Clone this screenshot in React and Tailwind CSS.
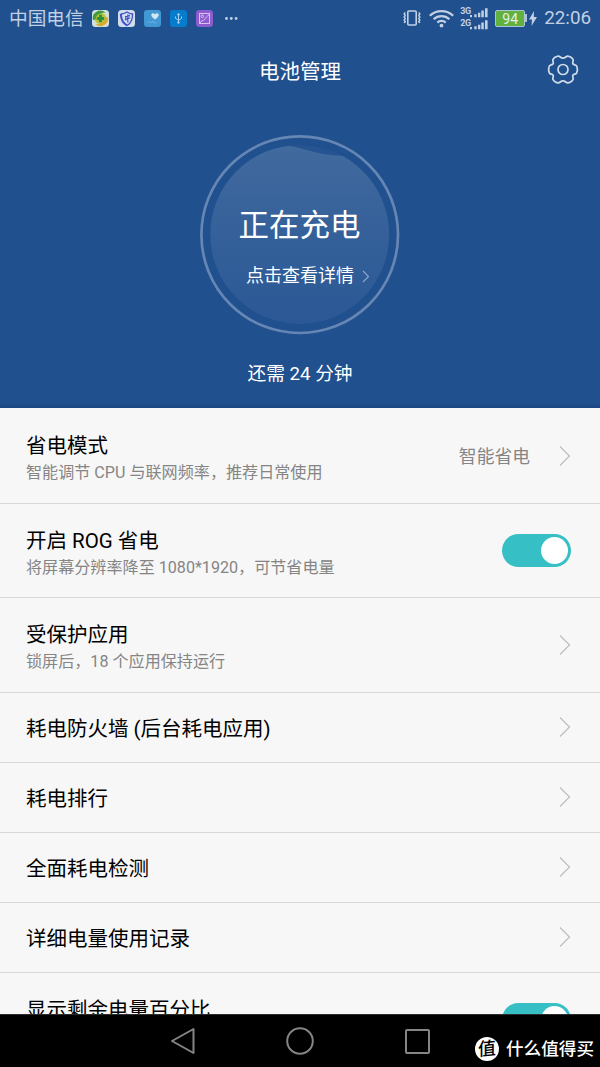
import React from "react";

const settings = [
  {
    title: "省电模式",
    note: "智能调节 CPU 与联网频率，推荐日常使用",
    value: "智能省电",
    tall: true,
  },
  {
    title: "开启 ROG 省电",
    note: "将屏幕分辨率降至 1080*1920，可节省电量",
    toggle: true,
    tall: true,
  },
  { title: "受保护应用", note: "锁屏后，18 个应用保持运行", tall: true },
  { title: "耗电防火墙 (后台耗电应用)" },
  { title: "耗电排行" },
  { title: "全面耗电检测" },
  { title: "详细电量使用记录" },
  { title: "显示剩余电量百分比", toggle: true, tall: true },
];

const Chevron = () => (
  <svg width="12" height="22" viewBox="0 0 12 22" fill="none" stroke="#bdbdbd" strokeWidth="1.2">
    <path d="M1 1.5 10.5 11 1 20.5" />
  </svg>
);

const Toggle = () => (
  <div className="flex h-[33px] w-[69px] items-center justify-end rounded-full bg-[#36c0c6] pr-[3px]">
    <div className="size-[27px] rounded-full bg-white" />
  </div>
);

const AppIcons = () => (
  <div className="flex items-center gap-[9px]">
    <svg width="17" height="17" viewBox="0 0 17 17">
      <rect width="17" height="17" rx="3.5" fill="#d3dfdc" />
      <circle cx="8.5" cy="8.5" r="5.8" fill="#b9c63c" />
      <path d="M1 10A7.5 7.5 0 0 1 13.5 2.8C8.5 2.5 4 4.5 3.5 9.5Z" fill="#3f9a40" />
      <path d="M15.8 7A7.5 7.5 0 0 1 3.5 14.2C9 14.5 13.5 12 13.3 7.5Z" fill="#d8a92e" />
      <path d="M8.5 4.8v7.4M4.8 8.5h7.4" stroke="#2f8f3a" strokeWidth="3" />
    </svg>
    <svg width="17" height="17" viewBox="0 0 17 17" fill="none">
      <rect width="17" height="17" rx="3.5" fill="#d2dcec" />
      <path d="M2.8 4C5 4 7 3.3 9 2c2 1.4 3.6 2 5.6 2 0 5-1.2 9-5.4 11.5" stroke="#3a4fcb" strokeWidth="1.3" />
      <path d="M2.8 4c.2 5 1.7 9 6.4 11.5" stroke="#3a4fcb" strokeWidth="2" />
      <path d="M9.8 4.5v8M7 6.8l5-1.2M7 10l5-2.3M7.8 7.5v2.5" stroke="#3a4fcb" strokeWidth="1.2" />
    </svg>
    <svg width="17" height="17" viewBox="0 0 17 17" fill="none">
      <rect width="17" height="17" rx="3" fill="#4198d4" />
      <path d="M11 9.5C8.5 7.5 7.3 6.3 7.3 5 7.3 3 10 2.8 11 4.5c1-1.7 3.7-1.5 3.7.5 0 1.3-1.2 2.5-3.7 4.5Z" fill="#d5e5f1" />
      <path d="M3 12.5l2-1 2 1.5 2-2 1 2 2.5-.5" stroke="#70b4e0" strokeWidth=".8" />
    </svg>
    <svg width="17" height="17" viewBox="0 0 17 17" fill="none" stroke="#a9cdec">
      <rect width="17" height="17" rx="3" fill="#067ccd" stroke="none" />
      <path d="M8.5 4v8M5.5 6.5v1.8l3 2 3-1.8V6.5" strokeWidth="1" />
      <path d="M7 5l1.5-2L10 5Z" fill="#a9cdec" strokeWidth=".3" />
      <circle cx="8.5" cy="12.5" r="1" fill="#a9cdec" strokeWidth=".5" />
    </svg>
    <svg width="17" height="17" viewBox="0 0 17 17" fill="none" stroke="#d3c3ee" strokeWidth="1">
      <rect width="17" height="17" rx="3.5" fill="#8d5ccf" stroke="none" />
      <rect x="3.5" y="3.5" width="10" height="10" />
      <circle cx="6.3" cy="6.3" r="1.3" />
      <path d="M4 13c1-3 3-1.5 4.5-3.5S11 6 13 5" />
    </svg>
  </div>
);

const SignalRow = ({ label }) => (
  <div className="flex h-3 items-start">
    <span className="w-[10px] text-[9px] leading-[9px] font-bold tracking-[-0.5px]">{label}</span>
    <svg width="18" height="12" viewBox="0 0 18 12" fill="currentColor">
      <path d="M0 8h2v2.2H0zM4.3 7.2h2.3v3H4.3zM8 5.8h2.3v4.4H8zM11.3 3.5h2.5v6.7h-2.5zM15 1.2h2.6v9h-2.6z" />
    </svg>
  </div>
);

const StatusBar = () => (
  <div className="flex h-9 items-center justify-between px-[9px] text-[#c1d0e4]">
    <div className="flex items-center">
      <span className="mr-2 pt-[1px] text-[18.7px] leading-6">中国电信</span>
      <AppIcons />
      <svg className="ml-3" width="13" height="3" viewBox="0 0 13 3" fill="currentColor">
        <circle cx="1.5" cy="1.5" r="1.4" />
        <circle cx="6.3" cy="1.5" r="1.4" />
        <circle cx="11.1" cy="1.5" r="1.4" />
      </svg>
    </div>
    <div className="flex items-center">
      <svg width="18" height="16" viewBox="0 0 18 16" fill="none" stroke="currentColor">
        <rect x="4.8" y="1" width="8.4" height="14" rx="1" strokeWidth="1.6" />
        <path d="M2.2 2.5l-1 1.5 1 1.5-1 1.5 1 1.5-1 1.5 1 1.5-1 1.5M15.8 2.5l1 1.5-1 1.5 1 1.5-1 1.5 1 1.5-1 1.5 1 1.5" strokeWidth="1.5" />
      </svg>
      <svg className="ml-2" width="25" height="19" viewBox="0 0 25 19" fill="none" stroke="currentColor" strokeWidth="2.2">
        <path d="M.8 6.7a17 17 0 0 1 23.4 0M4.6 10.3a11.5 11.5 0 0 1 15.8 0M8.3 13.6a6 6 0 0 1 8.4 0" />
        <circle cx="12.5" cy="16.6" r="1.9" fill="currentColor" stroke="none" />
      </svg>
      <div className="mt-[1px] ml-[6px] flex flex-col">
        <SignalRow label="3G" />
        <SignalRow label="2G" />
      </div>
      <div className="ml-[7px] flex items-center">
        <div className="flex h-[17px] w-[30px] items-center justify-center rounded-[2px] border-[1.5px] border-[#a9c3dc] bg-[#62b13e] pt-[1px] text-[14px] leading-none text-[#e3efe2]">
          94
        </div>
        <div className="h-2 w-[2px] bg-[#a9c3dc]" />
      </div>
      <svg className="ml-[2px]" width="8" height="15" viewBox="0 0 8 15" fill="currentColor">
        <path d="M5 0 0 8.5h3L2.5 15 8 6H4.8z" />
      </svg>
      <span className="ml-[7px] text-[18.8px] leading-6">22:06</span>
    </div>
  </div>
);

const GearIcon = () => (
  <svg width="32" height="31" viewBox="0 0 32 31" fill="none" stroke="#d0dbea" strokeWidth="1.7" strokeLinejoin="round">
    <path d="M11.3 2.1C13 2 13.6 4.2 16 4.2S19 2 20.7 2.1C22.5 2.2 25.7 4 26.1 5.7C26.5 7.3 25 8.7 26 9.9S28.9 10.6 29.6 12C30.4 13.8 30.4 17.2 29.6 19C28.9 20.4 27 19.9 26 21.1S26.5 23.7 26.1 25.3C25.7 27 22.5 28.8 20.7 28.9C19 29 18.4 26.8 16 26.8S13 29 11.3 28.9C9.5 28.8 6.3 27 5.9 25.3C5.5 23.7 7 22.3 6 21.1S3.1 20.4 2.4 19C1.6 17.2 1.6 13.8 2.4 12C3.1 10.6 5 11.1 6 9.9S5.5 7.3 5.9 5.7C6.3 4 9.5 2.2 11.3 2.1Z" />
    <circle cx="16" cy="15.5" r="5" />
  </svg>
);

const ChargeDial = () => (
  <div className="relative mx-auto size-[200px]">
    <svg className="absolute inset-0" width="200" height="200" viewBox="0 0 200 200">
      <defs>
        <linearGradient id="fill" x1="0" y1="0" x2="0" y2="1">
          <stop offset="0" stopColor="#fff" stopOpacity=".13" />
          <stop offset="1" stopColor="#6b87d0" stopOpacity=".08" />
        </linearGradient>
        <clipPath id="dial">
          <circle cx="99.7" cy="99.5" r="89.5" />
        </clipPath>
      </defs>
      <circle cx="99.7" cy="99.7" r="98.3" fill="none" stroke="#6686b3" strokeWidth="2.7" />
      <g clipPath="url(#dial)">
        <circle cx="99.7" cy="99.5" r="89.5" fill="#fff" fillOpacity=".025" />
        <path d="M0 20C40 14 65 8 90 11C112 15 120 22 160 21L200 20V200H0Z" fill="url(#fill)" />
      </g>
    </svg>
    <div className="relative flex flex-col items-center text-white">
      <div className="mt-[68px] -ml-[1px] text-[30.5px] leading-[46px]">正在充电</div>
      <div className="mt-[15px] ml-4 flex items-center text-[18px] leading-6">
        点击查看详情
        <svg className="ml-[8px]" width="8" height="13" viewBox="0 0 8 13" fill="none" stroke="#8ea9cf" strokeWidth="1.1">
          <path d="M1 1l5.5 5.5L1 12" />
        </svg>
      </div>
    </div>
  </div>
);

const SettingRow = ({ item }) => (
  <div
    className={`flex shrink-0 justify-between border-b border-[#d9d9d9] pr-[29px] pl-[26px] ${
      item.tall ? "h-[94.5px]" : "h-[70px]"
    }`}
  >
    <div className={item.tall ? "pt-[22px]" : "pt-[21.3px]"}>
      <div className="text-[20.5px] leading-[30px] text-black">{item.title}</div>
      {item.note && (
        <div className="text-[16.1px] leading-6 text-[#858585]">{item.note}</div>
      )}
    </div>
    <div className="flex items-center gap-[29px]">
      {item.value && (
        <span className="pt-[3px] text-[17.8px] text-[#858585]">{item.value}</span>
      )}
      {item.toggle ? <Toggle /> : <Chevron />}
    </div>
  </div>
);

const NavBar = () => (
  <div className="flex h-[53px] shrink-0 items-center border-t border-[#2b2d2d] bg-black pl-[170px]">
    <svg width="26" height="28" viewBox="0 0 26 28" fill="none" stroke="#858585" strokeWidth="2" strokeLinejoin="round">
      <path d="M23.5 2v24L2 14Z" />
    </svg>
    <svg className="ml-[90px]" width="28" height="28" viewBox="0 0 28 28" fill="none" stroke="#858585" strokeWidth="2">
      <circle cx="14" cy="14" r="12.8" />
    </svg>
    <div className="ml-[91px] size-[25px] rounded-[2px] border-2 border-[#858585]" />
    <div className="mt-4 ml-[45px] flex items-center text-white">
      <div className="flex size-6 items-center justify-center rounded-full bg-white text-[18px] font-medium text-black">
        <span className="-skew-x-6 -rotate-6">值</span>
      </div>
      <span className="mt-[1px] ml-[7px] text-[17.6px] font-medium whitespace-nowrap">什么值得买</span>
    </div>
  </div>
);

const App = () => {
  return (
    <div className="flex h-[1067px] w-[600px] flex-col overflow-hidden bg-[#f7f7f7] font-[Roboto,'Noto_Sans_CJK_SC',sans-serif]">
      <div className="flex h-[408.3px] shrink-0 flex-col bg-[#20508e]">
        <StatusBar />
        <div className="grid h-[70px] grid-cols-[1fr_auto_1fr] items-center px-[21px]">
          <h1 className="col-start-2 pt-[2px] text-[20.5px] text-white">电池管理</h1>
          <div className="mb-[3px] justify-self-end">
            <GearIcon />
          </div>
        </div>
        <div className="mt-[29px]">
          <ChargeDial />
        </div>
        <div className="mt-[25px] text-center text-[18.7px] leading-7 text-white">还需 24 分钟</div>
        <div className="mt-auto h-[5px] bg-linear-to-b from-[#20508e] to-[#1c4580]" />
      </div>
      <div className="flex min-h-0 flex-1 flex-col overflow-hidden pt-[0.9px]">
        {settings.map((item) => (
          <SettingRow key={item.title} item={item} />
        ))}
      </div>
      <NavBar />
    </div>
  );
};

export default App;
